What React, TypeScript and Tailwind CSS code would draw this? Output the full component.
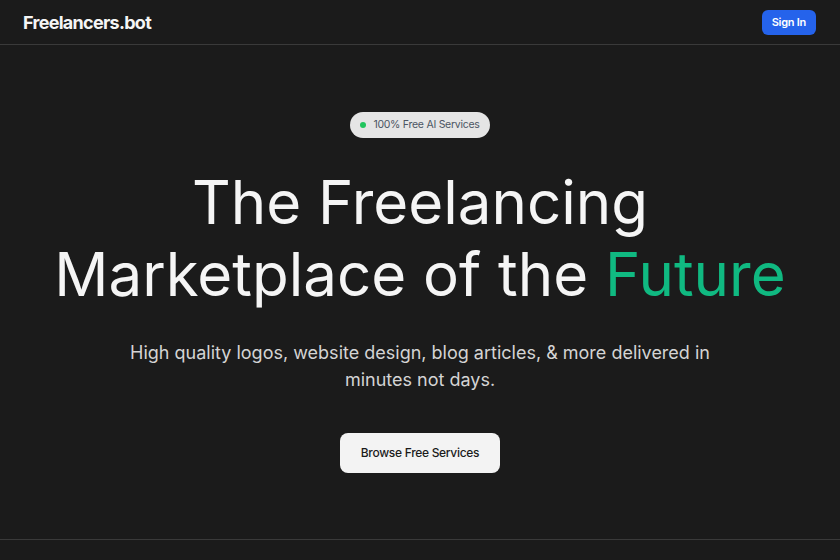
export default function App() {
  return (
    <div className="min-h-[560px] bg-[#1b1b1b] text-white" style={{ fontFamily: 'Inter, "Noto Sans", sans-serif' }}>
      <header className="flex h-[45px] items-center justify-between border-b border-[#3a3a3a] pl-[23px] pr-6">
        <span className="text-[18px] font-bold tracking-[-0.04em] text-[#f5f5f5]">Freelancers.bot</span>
        <button className="rounded-md bg-[#2563eb] px-[10px] py-[6px] text-[11px] leading-[13px] font-semibold tracking-tight text-white">
          Sign In
        </button>
      </header>

      <main className="flex h-[495px] flex-col items-center border-b border-[#3a3a3a] pt-[67px] text-center">
        <div className="flex items-center gap-[7px] rounded-full bg-[#e5e5e5] py-[6px] pl-[10px] pr-[10px] text-[10.5px] leading-[14px] tracking-tight text-[#4b5563]">
          <span className="h-[6px] w-[6px] rounded-full bg-[#22c55e]" />
          100% Free AI Services
        </div>

        <h1 className="mt-[28px] text-[60px] leading-[72px] font-normal text-[#f5f5f5]">
          The Freelancing
          <br />
          Marketplace of the <span className="text-[#10b981]">Future</span>
        </h1>

        <p className="mt-[29px] max-w-[620px] text-[18px] leading-[27px] text-[#d4d4d4]">
          High quality logos, website design, blog articles, &amp; more delivered in minutes not days.
        </p>

        <button className="mt-[40px] rounded-lg bg-[#f3f3f3] px-[21px] py-[11px] text-[12px] font-medium tracking-tight text-[#1b1b1b]">
          Browse Free Services
        </button>
      </main>
    </div>
  );
}
